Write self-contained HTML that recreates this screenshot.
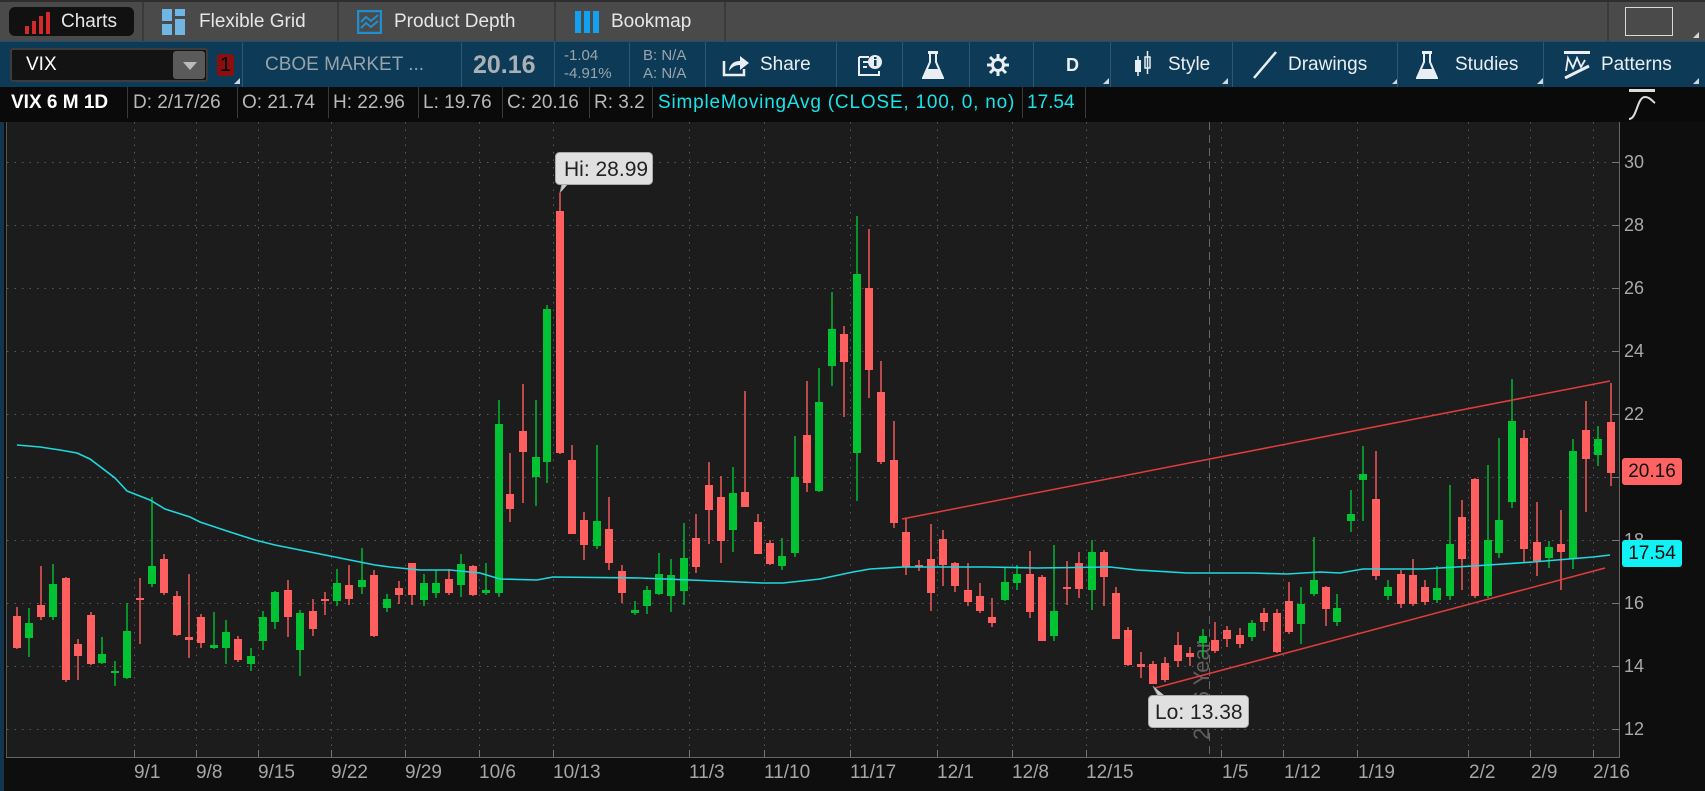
<!DOCTYPE html>
<html><head><meta charset="utf-8"><style>
*{margin:0;padding:0;box-sizing:border-box}
body{width:1705px;height:791px;overflow:hidden;background:#0e0e0e;font-family:"Liberation Sans",sans-serif;position:relative}
.abs{position:absolute}
.tabbar{left:0;top:0;width:1705px;height:41px;background:#4a4a4a;border-top:2px solid #2e2e2e}
.tab{position:absolute;top:0;height:39px;color:#e6e6e6;font-size:19px;line-height:39px}
.sep{position:absolute;top:0;width:2px;height:39px;background:#3a3a3a}
.tool{left:0;top:41px;width:1705px;height:46px;background:#0d3a56;border-top:1px solid #1f4f6e}
.tsep{position:absolute;top:0;width:1px;height:46px;background:#2a5878}
.tt{position:absolute;color:#e8eef2;font-size:19px;line-height:46px;top:0}
.tri{position:absolute;width:0;height:0;border-left:6px solid transparent;border-bottom:6px solid #cfd8de}
.info{left:0;top:87px;width:1705px;height:35px;background:#0a0a0a}
.it{position:absolute;top:0;line-height:31px;font-size:19px;color:#b8b8b8;white-space:nowrap}
.isep{position:absolute;top:0;width:1px;height:31px;background:#3a3a3a}
.ax{position:absolute;left:1624px;font-size:18px;color:#a9a9a9;line-height:20px}
.dt{position:absolute;top:762px;font-size:19px;color:#a6a6a6;line-height:22px}
</style></head><body>
<div class="abs tabbar">
 <div class="abs" style="left:9px;top:5px;width:125px;height:29px;background:#111;border-radius:6px"></div>
 <svg class="abs" style="left:24px;top:10px" width="26" height="22"><rect x="1" y="14" width="4" height="8" fill="#d42a2a"/><rect x="8" y="9" width="4" height="13" fill="#d42a2a"/><rect x="15" y="4" width="4" height="18" fill="#d42a2a"/><rect x="22" y="0" width="4" height="22" fill="#d42a2a"/></svg>
 <div class="tab" style="left:61px">Charts</div>
 <div class="sep" style="left:142px"></div>
 <svg class="abs" style="left:162px;top:7px" width="24" height="26"><rect x="0" y="0" width="10" height="12" fill="#6fb6e4"/><rect x="13" y="0" width="10" height="7" fill="#6fb6e4"/><rect x="13" y="10" width="10" height="16" fill="#6fb6e4"/><rect x="0" y="15" width="10" height="11" fill="#6fb6e4"/></svg>
 <div class="tab" style="left:199px">Flexible Grid</div>
 <div class="sep" style="left:337px"></div>
 <svg class="abs" style="left:357px;top:8px" width="25" height="24"><rect x="1" y="1" width="23" height="22" fill="none" stroke="#1e8fd0" stroke-width="2.5"/><path d="M4 12 L9 7 L14 11 L21 5 M4 18 L9 13 L14 17 L21 11" stroke="#1e8fd0" stroke-width="2" fill="none"/></svg>
 <div class="tab" style="left:394px">Product Depth</div>
 <div class="sep" style="left:554px"></div>
 <svg class="abs" style="left:575px;top:9px" width="25" height="22"><rect x="0" y="0" width="6" height="22" fill="#13a0f0"/><rect x="9" y="0" width="6" height="22" fill="#13a0f0"/><rect x="18" y="0" width="6" height="22" fill="#13a0f0"/></svg>
 <div class="tab" style="left:611px">Bookmap</div>
 <div class="sep" style="left:724px"></div>
 <div class="sep" style="left:1607px"></div>
 <div class="abs" style="left:1625px;top:5px;width:48px;height:29px;border:1px solid #d8d8d8"></div>
 <div class="tri" style="left:1693px;top:30px"></div>
</div>
<div class="abs tool">
 <div class="abs" style="left:10px;top:6px;width:198px;height:34px;background:#131313;border:2px solid #3c3c3c;border-radius:3px"></div>
 <div class="tt" style="left:26px;color:#fff">VIX</div>
 <div class="abs" style="left:173px;top:9px;width:32px;height:28px;background:#5a5a5a;border-radius:3px"></div>
 <div class="abs" style="left:183px;top:20px;border-left:7px solid transparent;border-right:7px solid transparent;border-top:8px solid #bbb"></div>
 <div class="abs" style="left:217px;top:12px;width:17px;height:22px;background:#8a1010;border-radius:3px;color:#000;font-size:20px;line-height:22px;text-align:center">1</div>
 <div class="tri" style="left:234px;top:36px"></div>
 <div class="tsep" style="left:242px"></div>
 <div class="tt" style="left:265px;color:#97a3ab">CBOE MARKET ...</div>
 <div class="tsep" style="left:461px"></div>
 <div class="tt" style="left:473px;color:#a9b1b6;font-size:25px;font-weight:bold">20.16</div>
 <div class="tsep" style="left:554px"></div>
 <div class="abs" style="left:564px;top:5px;color:#9aa5ac;font-size:15px;line-height:18px">-1.04<br>-4.91%</div>
 <div class="tsep" style="left:629px"></div>
 <div class="abs" style="left:643px;top:5px;color:#9aa5ac;font-size:15px;line-height:18px">B: N/A<br>A: N/A</div>
 <div class="tsep" style="left:705px"></div>
 <svg class="abs" style="left:722px;top:11px" width="28" height="24"><path d="M2 8 V22 H22 V16" stroke="#e8eef2" stroke-width="2.5" fill="none"/><path d="M7 18 C8 10 13 8 18 8 V3 L27 10 L18 17 V12 C13 12 10 14 7 18Z" fill="#e8eef2"/></svg>
 <div class="tt" style="left:760px">Share</div>
 <div class="tsep" style="left:836px"></div>
 <svg class="abs" style="left:857px;top:11px" width="26" height="24"><path d="M2 4 H12 M2 4 V22 H22 V18 M6 9 H11 M6 14 H10" stroke="#e8eef2" stroke-width="2" fill="none"/><circle cx="18" cy="9" r="7" fill="#e8eef2"/><rect x="17" y="7" width="2.5" height="6" fill="#0d3a56"/><rect x="17" y="4" width="2.5" height="2" fill="#0d3a56"/></svg>
 <div class="tsep" style="left:902px"></div>
 <svg class="abs" style="left:922px;top:8px" width="22" height="30"><rect x="6" y="1" width="10" height="3" fill="#e8eef2"/><path d="M8 4 V12 L1 28 H21 L14 12 V4" stroke="#e8eef2" stroke-width="2" fill="none"/><path d="M5 19 H17 L20 27 H2Z" fill="#e8eef2"/></svg>
 <div class="tsep" style="left:969px"></div>
 <svg class="abs" style="left:987px;top:12px" width="22" height="22"><circle cx="11" cy="11" r="5.5" fill="none" stroke="#e8eef2" stroke-width="3"/><path d="M11 0V5M11 17V22M0 11H5M17 11H22M3 3L7 7M15 15L19 19M19 3L15 7M7 15L3 19" stroke="#e8eef2" stroke-width="3"/></svg>
 <div class="tsep" style="left:1033px"></div>
 <div class="tt" style="left:1066px;font-weight:bold;font-size:18px">D</div>
 <div class="tri" style="left:1103px;top:36px"></div>
 <div class="tsep" style="left:1110px"></div>
 <svg class="abs" style="left:1134px;top:9px" width="18" height="28"><rect x="1" y="9" width="6" height="12" fill="#e8eef2"/><path d="M4 5V25" stroke="#e8eef2" stroke-width="1.5"/><rect x="11" y="6" width="5" height="11" fill="none" stroke="#e8eef2" stroke-width="1.5"/><path d="M13.5 0V23" stroke="#e8eef2" stroke-width="1.5"/></svg>
 <div class="tt" style="left:1168px">Style</div>
 <div class="tri" style="left:1222px;top:36px"></div>
 <div class="tsep" style="left:1232px"></div>
 <svg class="abs" style="left:1252px;top:9px" width="26" height="28"><path d="M2 27 L24 1" stroke="#e8eef2" stroke-width="2.5"/></svg>
 <div class="tt" style="left:1288px">Drawings</div>
 <div class="tri" style="left:1392px;top:36px"></div>
 <div class="tsep" style="left:1397px"></div>
 <svg class="abs" style="left:1416px;top:8px" width="22" height="30"><rect x="6" y="1" width="10" height="3" fill="#e8eef2"/><path d="M8 4 V12 L1 28 H21 L14 12 V4" stroke="#e8eef2" stroke-width="2" fill="none"/><path d="M5 19 H17 L20 27 H2Z" fill="#e8eef2"/></svg>
 <div class="tt" style="left:1455px">Studies</div>
 <div class="tri" style="left:1537px;top:36px"></div>
 <div class="tsep" style="left:1543px"></div>
 <svg class="abs" style="left:1563px;top:9px" width="28" height="28"><rect x="1" y="0" width="26" height="3" fill="#e8eef2"/><path d="M3 20 L5 7 L10 17 L14 7 L18 16 L22 9" stroke="#e8eef2" stroke-width="1.8" fill="none"/><path d="M2 27 L26 15" stroke="#e8eef2" stroke-width="3"/></svg>
 <div class="tt" style="left:1601px">Patterns</div>
 <div class="tri" style="left:1693px;top:36px"></div>
</div>
<div class="abs info">
 <div class="it" style="left:11px;color:#fff;font-weight:bold">VIX 6 M 1D</div>
 <div class="isep" style="left:127px"></div>
 <div class="it" style="left:133px">D: 2/17/26</div>
 <div class="isep" style="left:237px"></div>
 <div class="it" style="left:242px">O: 21.74</div>
 <div class="isep" style="left:328px"></div>
 <div class="it" style="left:333px">H: 22.96</div>
 <div class="isep" style="left:418px"></div>
 <div class="it" style="left:423px">L: 19.76</div>
 <div class="isep" style="left:502px"></div>
 <div class="it" style="left:507px">C: 20.16</div>
 <div class="isep" style="left:589px"></div>
 <div class="it" style="left:594px">R: 3.2</div>
 <div class="isep" style="left:652px"></div>
 <div class="it" style="left:658px;color:#19e3e8;letter-spacing:0.8px">SimpleMovingAvg (CLOSE, 100, 0, no)</div>
 <div class="isep" style="left:1022px"></div>
 <div class="it" style="left:1027px;color:#19e3e8">17.54</div>
 <div class="isep" style="left:1085px"></div>
 <svg class="abs" style="left:1625px;top:2px" width="36" height="32"><rect x="4" y="0" width="26" height="3" fill="#ddd"/><path d="M4 30 C12 30 12 8 20 8 C25 8 27 12 30 14" stroke="#ddd" stroke-width="2" fill="none"/></svg>
</div>
<svg class="abs" id="ch" style="left:0;top:0" width="1705" height="791"></svg>
<div class="ax" style="top:152px">30</div>
<div class="ax" style="top:215px">28</div>
<div class="ax" style="top:278px">26</div>
<div class="ax" style="top:341px">24</div>
<div class="ax" style="top:404px">22</div>
<div class="ax" style="top:530px">18</div>
<div class="ax" style="top:593px">16</div>
<div class="ax" style="top:656px">14</div>
<div class="ax" style="top:719px">12</div>
<div class="abs" style="left:1622px;top:458px;width:60px;height:27px;background:#ff6262;border-radius:3px;color:#111;font-size:19px;line-height:27px;text-align:center">20.16</div>
<div class="abs" style="left:1622px;top:540px;width:60px;height:27px;background:#10f2f5;border-radius:3px;color:#111;font-size:19px;line-height:27px;text-align:center">17.54</div>
<div class="dt" style="left:134px">9/1</div>
<div class="dt" style="left:196px">9/8</div>
<div class="dt" style="left:258px">9/15</div>
<div class="dt" style="left:331px">9/22</div>
<div class="dt" style="left:405px">9/29</div>
<div class="dt" style="left:479px">10/6</div>
<div class="dt" style="left:553px">10/13</div>
<div class="dt" style="left:689px">11/3</div>
<div class="dt" style="left:764px">11/10</div>
<div class="dt" style="left:850px">11/17</div>
<div class="dt" style="left:937px">12/1</div>
<div class="dt" style="left:1012px">12/8</div>
<div class="dt" style="left:1086px">12/15</div>
<div class="dt" style="left:1222px">1/5</div>
<div class="dt" style="left:1284px">1/12</div>
<div class="dt" style="left:1358px">1/19</div>
<div class="dt" style="left:1469px">2/2</div>
<div class="dt" style="left:1531px">2/9</div>
<div class="dt" style="left:1593px">2/16</div>
<script>
var C=[[17,0,607,616,648,649],[29,1,608,623,638,657],[41,0,566,605,617,620],[53,1,564,584,617,620],[66,0,577,578,680,682],[78,0,639,644,656,680],[91,0,612,615,664,665],[102,1,637,654,663,664],[115,1,661,671,673,686],[127,1,603,631,678,679],[140,0,578,598,600,644],[152,1,497,566,584,587],[164,0,554,559,593,595],[177,0,591,596,635,636],[189,0,574,637,640,658],[201,0,614,617,643,648],[214,1,612,645,648,649],[226,1,620,632,648,664],[238,0,636,639,660,662],[251,1,648,656,664,671],[263,1,611,617,641,650],[275,1,591,592,622,629],[288,0,580,590,617,637],[300,1,610,613,650,676],[313,0,599,611,629,636],[325,0,592,599,601,615],[337,1,569,583,601,606],[349,0,565,585,599,605],[362,1,548,580,587,594],[374,0,570,575,636,637],[387,1,594,599,608,612],[399,0,581,588,595,604],[412,0,563,563,595,605],[424,1,574,583,600,606],[436,1,570,583,593,598],
[449,0,569,579,593,595],[461,1,554,564,585,597],[473,0,565,566,595,596],[486,1,563,590,593,595],[499,1,400,424,593,597],[510,0,453,494,509,522],[523,0,384,431,452,503],[536,1,400,457,477,506],[547,1,305,309,462,483],[560,0,193,211,453,454],[572,0,445,460,534,534],[584,0,512,520,545,560],[597,1,445,521,546,549],[609,0,497,529,563,570],[622,0,565,571,593,603],[635,1,601,610,613,615],[647,1,586,590,606,614],[659,1,553,574,594,595],[671,1,559,575,596,612],[684,1,523,558,591,605],[696,0,514,538,567,573],[709,0,462,485,510,544],[721,0,476,497,541,563],[733,1,467,493,530,552],[745,0,391,492,507,507],[758,0,514,522,554,554],[770,0,540,543,564,565],[782,1,538,556,566,570],[795,1,436,477,553,557],[807,0,381,435,483,492],[819,1,368,402,491,492],[832,1,292,329,366,386],[844,0,326,334,362,417],[857,1,216,274,453,501],[869,0,229,288,370,398],[881,0,361,392,462,464],
[894,0,421,460,523,528],[906,0,518,532,567,575],[919,0,560,565,567,571],[931,0,524,559,593,611],[943,0,530,539,565,586],[955,0,562,563,586,592],[968,0,563,590,602,606],[980,0,583,596,611,613],[992,0,598,617,623,627],[1005,1,568,582,600,601],[1017,1,565,574,583,590],[1030,0,551,574,612,618],[1042,0,575,577,641,641],[1054,1,545,611,636,641],[1067,0,561,587,589,605],[1079,0,552,563,589,598],[1092,1,540,552,590,610],[1104,0,550,552,577,606],[1116,0,587,593,639,639],[1128,0,627,630,665,666],[1141,0,652,664,667,678],[1153,0,661,664,684,684],[1165,0,657,663,680,682],[1178,0,632,645,661,667],[1190,0,647,653,657,666],[1203,1,629,636,643,657],[1215,0,622,640,651,653],[1227,0,626,630,639,647],[1240,0,628,635,644,648],[1252,1,620,623,637,641],[1264,0,608,613,622,631],[1277,0,609,613,652,653],[1289,0,582,601,632,634],[1301,1,587,604,624,644],[1314,1,537,580,594,596],[1326,0,586,587,609,626],[1337,1,594,608,622,626],
[1351,1,490,514,521,532],[1363,1,446,474,480,521],[1376,0,451,499,576,580],[1388,1,580,587,596,600],[1401,0,570,574,604,608],[1413,0,559,575,604,606],[1425,0,580,587,602,605],[1437,1,566,588,600,603],[1450,1,485,544,596,600],[1462,0,500,517,559,590],[1475,0,478,479,596,598],[1488,1,465,540,596,598],[1499,1,438,520,553,558],[1512,1,379,421,502,508],[1524,0,430,438,549,563],[1537,0,502,542,561,576],[1549,1,541,547,558,568],[1561,0,510,544,552,590],[1573,1,439,451,559,569],[1586,0,401,430,459,512],[1598,1,426,439,455,466],[1611,0,383,422,473,486]];
var s='<rect x="6" y="122" width="1613" height="635" fill="#1c1c1c"/><rect x="0" y="122" width="4" height="669" fill="#123650"/>';
s+='<line x1="6.5" y1="122" x2="6.5" y2="757" stroke="#555"/><line x1="1619.5" y1="122" x2="1619.5" y2="757" stroke="#666"/><line x1="6" y1="757.5" x2="1620" y2="757.5" stroke="#666"/>';
[162,225,288,351,414,477,540,603,666,729].forEach(function(y){s+='<line x1="7" y1="'+(y+.5)+'" x2="1619" y2="'+(y+.5)+'" stroke="#5a5a5a" stroke-dasharray="1.5 6"/><line x1="1612" y1="'+(y+.5)+'" x2="1619" y2="'+(y+.5)+'" stroke="#777"/>'});
[134,196,258,331,405,479,553,689,764,850,937,1012,1086,1221,1283,1357,1468,1530,1593].forEach(function(x){s+='<line x1="'+(x+.5)+'" y1="122" x2="'+(x+.5)+'" y2="757" stroke="#5a5a5a" stroke-dasharray="1.5 6"/><line x1="'+(x+.5)+'" y1="750" x2="'+(x+.5)+'" y2="757" stroke="#777"/>'});
s+='<line x1="1209.5" y1="122" x2="1209.5" y2="757" stroke="#666" stroke-dasharray="8 5"/>';
s+='<text transform="translate(1209,740) rotate(-90)" font-family="Liberation Sans" font-size="22" fill="#5e5e5e">2026 Year</text>';
C.forEach(function(c){var col=c[1]?'#00c232':'#ff5f5f';s+='<line x1="'+c[0]+'" y1="'+c[2]+'" x2="'+c[0]+'" y2="'+c[5]+'" stroke="'+col+'" stroke-width="1.4"/><rect x="'+(c[0]-4)+'" y="'+c[3]+'" width="8" height="'+Math.max(2,c[4]-c[3])+'" fill="'+col+'"/>'});
s+='<polyline fill="none" stroke="#1fd8dd" stroke-width="1.6" points="17,445 40,447 60,450 77,453 90,459 115,478 127,491 150,500 165,509 190,517 200,522 230,532 255,540 275,545 300,550 325,555 350,560 375,565 390,567 420,570 450,570 480,573 500,579 537,580 553,577 640,578 690,580 763,583 783,583 820,579 853,572 870,569 903,567 987,567 1037,568 1110,567 1137,570 1187,573 1253,573 1287,574 1320,572 1340,573 1363,569 1423,569 1473,566 1533,562 1593,557 1610,555"/>';
s+='<line x1="902" y1="519" x2="1610" y2="381" stroke="#e23c3c" stroke-width="1.5"/><line x1="1155" y1="688" x2="1605" y2="568" stroke="#e23c3c" stroke-width="1.5"/>';
s+='<path d="M560 193 L562 184 L568 184" fill="#ccc" stroke="#999"/><rect x="555.5" y="152.5" width="97" height="32" rx="4" fill="#e0e0e0" stroke="#aaa"/><text x="564" y="176" font-family="Liberation Sans" font-size="21" fill="#222">Hi: 28.99</text>';
s+='<path d="M1153 686 L1158 696 L1165 696" fill="#ccc" stroke="#999"/><rect x="1148.5" y="695.5" width="100" height="32" rx="4" fill="#e0e0e0" stroke="#aaa"/><text x="1155" y="719" font-family="Liberation Sans" font-size="21" fill="#222">Lo: 13.38</text>';
document.getElementById('ch').innerHTML=s;
</script>
</body></html>
